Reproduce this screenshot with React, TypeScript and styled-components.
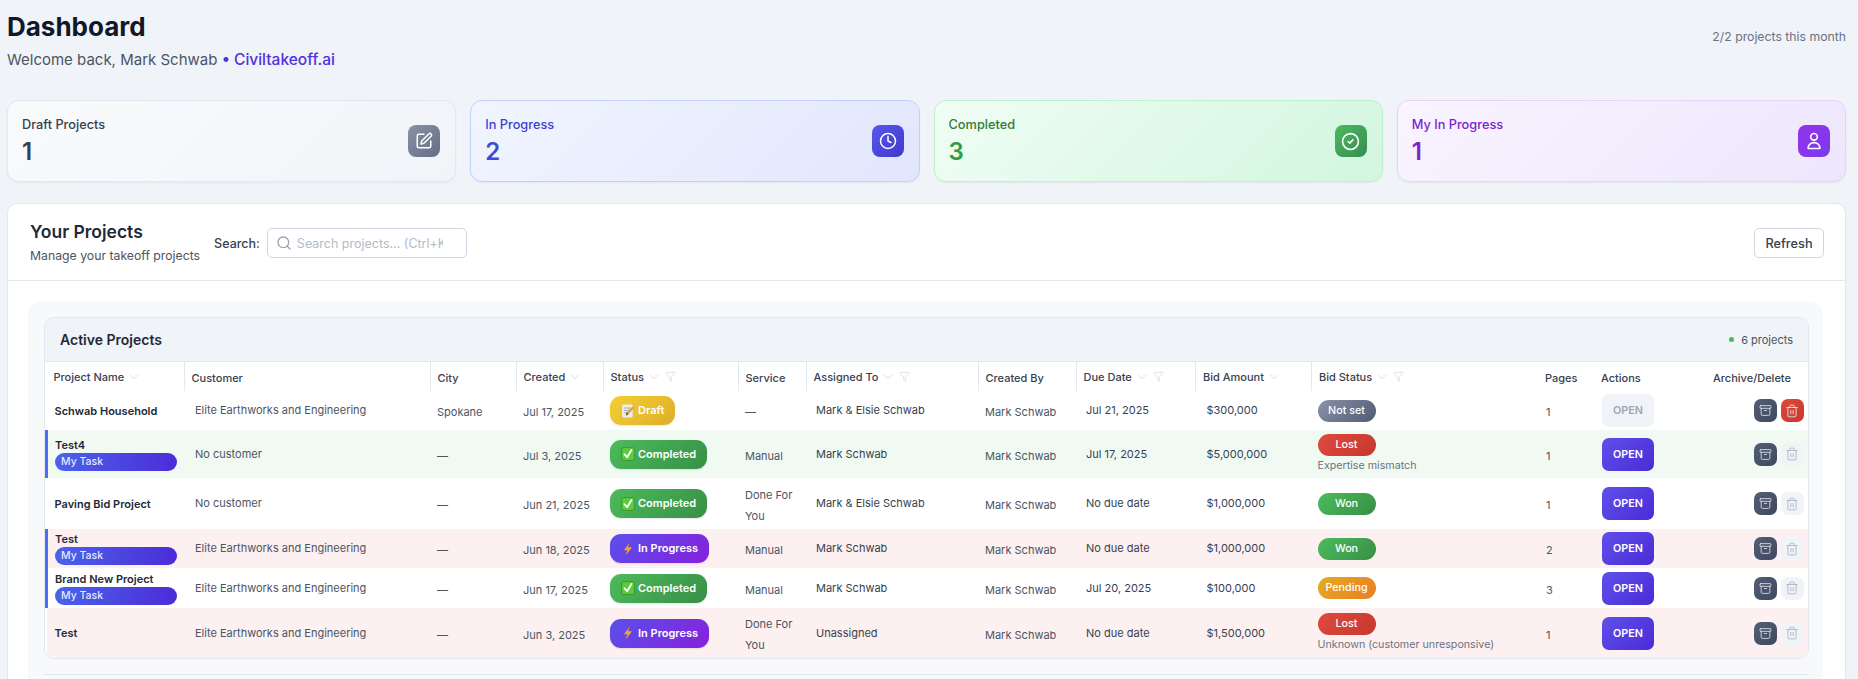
import React from "react";
import styled, { createGlobalStyle } from "styled-components";
import { SquarePen, Clock, CircleCheck, Search, ChevronDown, Filter, Archive, Trash2 } from "lucide-react";

const Global = createGlobalStyle`
  html, body { margin: 0; padding: 0; height: 100%; overflow: hidden; }
  body { background: #f0f3f8; font-family: Inter, "Liberation Sans", sans-serif; color: #1f2937; }
  * { box-sizing: border-box; }
`;

const Page = styled.div`
  height: 679px;
  overflow: hidden;
  padding: 0 12px 0 7px;
`;

const TopBar = styled.header`
  display: flex;
  justify-content: space-between;
  align-items: flex-start;
  height: 100px;
`;

const TitleBlock = styled.div`
  padding-top: 8px;
`;

const Title = styled.h1`
  margin: 0;
  font-size: 26px;
  line-height: 38px;
  font-weight: 700;
  color: #111827;
`;

const Subtitle = styled.p`
  margin: 3px 0 0;
  font-size: 15px;
  line-height: 22px;
  color: #4b5563;
`;

const Org = styled.span`
  color: #4f30e0;
  font-size: 15.5px;
  font-weight: 500;
`;

const Quota = styled.div`
  font-size: 12.25px;
  color: #6b7280;
  margin-top: 28px;
  line-height: 18px;
`;

const StatGrid = styled.section`
  display: grid;
  grid-template-columns: repeat(4, 1fr);
  gap: 14px;
  height: 82px;
`;

const tones = {
  gray: { bg: "#f9fafc, #f1f4f8", border: "#e2e7f0", label: "#374151", value: "#374151", icon: "#8a92a6, #646d85" },
  blue: { bg: "#f0f5ff, #e2e6fd", border: "#bfd2fb", label: "#3d3fd0", value: "#3d4bd8", icon: "#5558ec, #4338ca" },
  green: { bg: "#f0fdf4, #d2f6df", border: "#bdf0cd", label: "#2f7d3b", value: "#2f9e48", icon: "#4cb85f, #388e50" },
  purple: { bg: "#f9f4ff, #ede6fd", border: "#e6d3fb", label: "#7e22ce", value: "#7e22ce", icon: "#9333ea, #7c3aed" },
};
type Tone = keyof typeof tones;

const StatCard = styled.article<{ $tone: Tone }>`
  display: flex;
  align-items: center;
  justify-content: space-between;
  padding: 0 15px 0 14px;
  border-radius: 12px;
  border: 1px solid ${(p) => tones[p.$tone].border};
  background: linear-gradient(135deg, ${(p) => tones[p.$tone].bg});
  box-shadow: 0 1px 2px rgba(15, 23, 42, 0.05);
`;

const StatLabel = styled.div<{ $tone: Tone }>`
  font-size: 12.75px;
  line-height: 18px;
  font-weight: 500;
  color: ${(p) => tones[p.$tone].label};
`;

const StatValue = styled.div<{ $tone: Tone }>`
  font-size: 24px;
  line-height: 30px;
  margin-top: 3px;
  font-weight: 600;
  color: ${(p) => tones[p.$tone].value};
`;

const StatIcon = styled.div<{ $tone: Tone }>`
  width: 32px;
  height: 32px;
  border-radius: 8px;
  display: flex;
  align-items: center;
  justify-content: center;
  color: #fff;
  background: linear-gradient(135deg, ${(p) => tones[p.$tone].icon});
`;

const Panel = styled.section`
  margin-top: 21px;
  height: 600px;
  background: #fff;
  border: 1px solid #e2e7f0;
  border-radius: 10px;
`;

const PanelHead = styled.div`
  height: 77px;
  display: flex;
  align-items: center;
  justify-content: space-between;
  padding: 0 21px 0 22px;
  border-bottom: 1px solid #e2e7f0;
`;

const HeadLeft = styled.div`
  display: flex;
  align-items: center;
`;

const PanelTitle = styled.h2`
  margin: 1px 0 0;
  font-size: 17.5px;
  line-height: 24px;
  font-weight: 600;
  color: #1f2937;
`;

const PanelSub = styled.p`
  margin: 3px 0 0;
  font-size: 12.25px;
  line-height: 18px;
  color: #4b5563;
`;

const SearchLabel = styled.label`
  margin-left: 14px;
  margin-top: 2px;
  font-size: 12.5px;
  font-weight: 500;
  color: #374151;
`;

const SearchBox = styled.div`
  margin-left: 7px;
  margin-top: 2px;
  width: 200px;
  height: 30px;
  display: flex;
  align-items: center;
  gap: 5px;
  padding: 0 8px;
  border: 1px solid #cfd5e1;
  border-radius: 5px;
  color: #9aa3b2;
  overflow: hidden;
`;

const SearchInput = styled.input`
  border: 0;
  outline: 0;
  flex: none;
  width: 146px;
  padding: 0;
  background: transparent;
  font: 400 12.5px Inter, sans-serif;
  &::placeholder { color: #b4bbc8; }
`;

const RefreshButton = styled.button`
  margin-top: 2px;
  width: 70px;
  height: 30px;
  background: #fff;
  border: 1px solid #cfd5e1;
  border-radius: 5px;
  font: 500 12.75px Inter, sans-serif;
  color: #374151;
`;

const PanelBody = styled.div`
  padding: 21px 22px 0 20px;
`;

const Section = styled.div`
  background: #f8f9fb;
  border-radius: 12px;
  height: 400px;
  padding: 15px 14px 0 16px;
`;

const TableCard = styled.div`
  border: 1px solid #e2e7f0;
  border-radius: 10px;
  overflow: hidden;
  background: #fff;
`;

const TableHead = styled.div`
  height: 44px;
  display: flex;
  align-items: center;
  justify-content: space-between;
  padding: 0 15px;
  background: #f0f3f8;
  border-bottom: 1px solid #e2e7f0;
`;

const TableTitle = styled.h3`
  margin: 0;
  font-size: 14px;
  font-weight: 600;
  color: #1f2937;
`;

const CountLabel = styled.div`
  display: flex;
  align-items: center;
  gap: 7px;
  font-size: 11px;
  color: #4b5563;
`;

const Dot = styled.span`
  width: 5px;
  height: 5px;
  border-radius: 50%;
  background: #3fbf5f;
`;

const NextSection = styled.div`
  margin-top: 15px;
  border-top: 1px solid #e2e7f0;
`;

const Table = styled.table`
  width: 100%;
  table-layout: fixed;
  border-collapse: collapse;
  font-size: 11px;
`;

const Th = styled.th<{ $sep?: boolean }>`
  height: 29px;
  padding: 0 0 0 7px;
  text-align: left;
  font-size: 11px;
  font-weight: 500;
  color: #374151;
  white-space: nowrap;
  border-right: ${(p) => (p.$sep ? "1px solid #e2e7f0" : "0")};
`;

const HeadInner = styled.span<{ $sorted?: boolean }>`
  display: inline-flex;
  align-items: center;
  gap: 3px;
  color: #374151;
  position: relative;
  top: ${(p) => (p.$sorted ? 0 : 1)}px;
`;

const SortIcon = styled(ChevronDown)`
  color: #c8ced9;
`;

const FilterIcon = styled(Filter)`
  color: #c8ced9;
  margin-left: 1px;
`;

const rowBg = { none: "#fff", green: "#f0faf3", red: "#fcf0f0" };

const Tr = styled.tr<{ $bg: keyof typeof rowBg; $h: number }>`
  height: ${(p) => p.$h}px;
  background: ${(p) => rowBg[p.$bg]};
`;

const Td = styled.td<{ $pl?: number; $low?: boolean }>`
  padding: ${(p) => (p.$low ? "4px" : "0")} 0 0 ${(p) => p.$pl ?? 8}px;
  color: #4b5563;
  font-size: 11px;
  line-height: 21px;
  vertical-align: middle;
  white-space: nowrap;
`;

const WrapTd = styled(Td)`
  white-space: normal;
  padding-right: 6px;
`;

const AmountTd = styled(Td)`
  color: #374151;
`;

const NameTd = styled.td<{ $mine: boolean }>`
  padding: 0 6px 0 ${(p) => (p.$mine ? 7 : 8)}px;
  border-left: ${(p) => (p.$mine ? "3px solid #4f6ef7" : "0")};
  vertical-align: middle;
`;

const NameText = styled.div`
  font-size: 11px;
  line-height: 14px;
  font-weight: 600;
  color: #1f2937;
`;

const MyTask = styled.div`
  height: 18px;
  width: 122px;
  border-radius: 9px;
  margin-top: 1px;
  padding-left: 6px;
  font-size: 10.5px;
  line-height: 18px;
  font-weight: 500;
  color: #e6e9ff;
  background: linear-gradient(90deg, #4a63ea, #4c2cd8);
`;

const statusStyles = {
  draft: "#f2cf35, #dfae27",
  done: "#4cbb5c, #388f46",
  progress: "#5b50ea, #8620dc",
};

const StatusPill = styled.span<{ $kind: keyof typeof statusStyles }>`
  display: inline-flex;
  align-items: center;
  gap: 3px;
  height: 29px;
  padding: 0 11px;
  border-radius: 11px;
  font-size: 11px;
  font-weight: 600;
  color: #fff;
  background: linear-gradient(135deg, ${(p) => statusStyles[p.$kind]});
  box-shadow: 0 1px 2px rgba(15, 23, 42, 0.1);
`;

const bidStyles = {
  none: "#8a93a8, #4f5a75",
  lost: "#e0493f, #c5392c",
  won: "#4cbb5c, #388f46",
  pending: "#e3ad20, #ea7c25",
};

const BidPill = styled.div<{ $kind: keyof typeof bidStyles }>`
  width: 58px;
  height: 22px;
  border-radius: 11px;
  text-align: center;
  font-size: 10.75px;
  line-height: 22px;
  font-weight: 500;
  color: #fff;
  background: linear-gradient(135deg, ${(p) => bidStyles[p.$kind]});
`;

const BidNote = styled.div`
  margin-top: 2px;
  font-size: 10.7px;
  line-height: 16px;
  color: #6b7280;
`;

const OpenButton = styled.button<{ $off?: boolean }>`
  display: block;
  width: 52px;
  height: 33px;
  border: 0;
  padding: 0;
  border-radius: 7px;
  font: 600 10.75px Inter, sans-serif;
  color: ${(p) => (p.$off ? "#a0a7b6" : "#fff")};
  background: ${(p) => (p.$off ? "#f0f3f8" : "linear-gradient(135deg, #5f50ea, #4a2bd6)")};
`;

const ActionRow = styled.div`
  display: flex;
  justify-content: flex-end;
  gap: 4px;
  padding-right: 7px;
`;

const IconButton = styled.button<{ $kind: "archive" | "delete" | "off" }>`
  width: 23px;
  height: 23px;
  padding: 0;
  border: 0;
  border-radius: 7px;
  display: flex;
  align-items: center;
  justify-content: center;
  color: ${(p) => (p.$kind === "off" ? "#aab2c4" : "#e6e9f0")};
  background: ${(p) =>
    p.$kind === "archive"
      ? "linear-gradient(135deg, #545e75, #3e4860)"
      : p.$kind === "delete"
        ? "linear-gradient(135deg, #dd4a3a, #c43a2b)"
        : "#f0f3f8"};
`;

const UserGlyph = () => (
  <svg width="20" height="20" viewBox="0 0 24 24" fill="none" stroke="currentColor" strokeWidth="2" strokeLinejoin="round">
    <circle cx="12" cy="7" r="4" />
    <path d="M5 21v-1a7 6 0 0 1 14 0v1z" />
  </svg>
);

const MemoEmoji = () => (
  <svg width="14" height="14" viewBox="0 0 24 24">
    <rect x="2" y="1" width="18" height="22" rx="2" fill="#eceef2" />
    <path d="M5 7h12M5 11h12M5 15h7" stroke="#9aa3b2" strokeWidth="1.5" />
    <path d="M8 20l2-6L20 4l3 3-10 10z" fill="#e9a13b" />
    <path d="M8 20l2-6 3 3z" fill="#5b4a3a" />
  </svg>
);

const CheckEmoji = () => (
  <svg width="14" height="14" viewBox="0 0 24 24">
    <rect x="1" y="1" width="22" height="22" rx="4" fill="#5ccb3c" stroke="#2f8a22" strokeWidth="1.2" />
    <path d="M6 12.5l4.5 5L18 5" fill="none" stroke="#fff" strokeWidth="3.2" strokeLinecap="round" strokeLinejoin="round" />
  </svg>
);

const BoltEmoji = () => (
  <svg width="14" height="14" viewBox="0 0 24 24">
    <path d="M15 1L5 14h6l-3 9 11-14h-7z" fill="#f5a623" />
  </svg>
);

const columns = [137.5, 246, 86, 87, 135, 68, 172, 98, 119.5, 116, 226.5, 56, 112, 104.5];

const headers: { label: string; sep?: boolean; sort?: boolean; filter?: boolean }[] = [
  { label: "Project Name", sep: true, sort: true },
  { label: "Customer", sep: true },
  { label: "City", sep: true },
  { label: "Created", sep: true, sort: true },
  { label: "Status", sep: true, sort: true, filter: true },
  { label: "Service", sep: true },
  { label: "Assigned To", sep: true, sort: true, filter: true },
  { label: "Created By", sep: true },
  { label: "Due Date", sep: true, sort: true, filter: true },
  { label: "Bid Amount", sep: true, sort: true },
  { label: "Bid Status", sort: true, filter: true },
  { label: "Pages" },
  { label: "Actions" },
  { label: "Archive/Delete" },
];

type Project = {
  name: string; mine?: boolean; bg: keyof typeof rowBg; h: number; customer: string; city: string; created: string;
  status: keyof typeof statusStyles; service: string; assigned: string; due: string; amount: string;
  bid: keyof typeof bidStyles; note?: string; pages: number; off?: boolean;
};

const projects: Project[] = [
  { name: "Schwab Household", bg: "none", h: 39, customer: "Elite Earthworks and Engineering", city: "Spokane", created: "Jul 17, 2025", status: "draft", service: "—", assigned: "Mark & Elsie Schwab", due: "Jul 21, 2025", amount: "$300,000", bid: "none", pages: 1, off: true },
  { name: "Test4", mine: true, bg: "green", h: 48, customer: "No customer", city: "—", created: "Jul 3, 2025", status: "done", service: "Manual", assigned: "Mark Schwab", due: "Jul 17, 2025", amount: "$5,000,000", bid: "lost", note: "Expertise mismatch", pages: 1 },
  { name: "Paving Bid Project", bg: "none", h: 51, customer: "No customer", city: "—", created: "Jun 21, 2025", status: "done", service: "Done For You", assigned: "Mark & Elsie Schwab", due: "No due date", amount: "$1,000,000", bid: "won", pages: 1 },
  { name: "Test", mine: true, bg: "red", h: 39, customer: "Elite Earthworks and Engineering", city: "—", created: "Jun 18, 2025", status: "progress", service: "Manual", assigned: "Mark Schwab", due: "No due date", amount: "$1,000,000", bid: "won", pages: 2 },
  { name: "Brand New Project", mine: true, bg: "none", h: 40, customer: "Elite Earthworks and Engineering", city: "—", created: "Jun 17, 2025", status: "done", service: "Manual", assigned: "Mark Schwab", due: "Jul 20, 2025", amount: "$100,000", bid: "pending", pages: 3 },
  { name: "Test", bg: "red", h: 50, customer: "Elite Earthworks and Engineering", city: "—", created: "Jun 3, 2025", status: "progress", service: "Done For You", assigned: "Unassigned", due: "No due date", amount: "$1,500,000", bid: "lost", note: "Unknown (customer unresponsive)", pages: 1 },
];

const statusText = {
  draft: { icon: <MemoEmoji />, label: "Draft" },
  done: { icon: <CheckEmoji />, label: "Completed" },
  progress: { icon: <BoltEmoji />, label: "In Progress" },
};
const bidText = { none: "Not set", lost: "Lost", won: "Won", pending: "Pending" };

const stats: { tone: Tone; label: string; value: number; icon: React.ReactNode }[] = [
  { tone: "gray", label: "Draft Projects", value: 1, icon: <SquarePen size={18} /> },
  { tone: "blue", label: "In Progress", value: 2, icon: <Clock size={18} /> },
  { tone: "green", label: "Completed", value: 3, icon: <CircleCheck size={19} /> },
  { tone: "purple", label: "My In Progress", value: 1, icon: <UserGlyph /> },
];

export default function App() {
  return (
    <Page>
      <Global />
      <TopBar>
        <TitleBlock>
          <Title>Dashboard</Title>
          <Subtitle>
            Welcome back, Mark Schwab <Org>• Civiltakeoff.ai</Org>
          </Subtitle>
        </TitleBlock>
        <Quota>2/2 projects this month</Quota>
      </TopBar>
      <StatGrid>
        {stats.map((s) => (
          <StatCard key={s.tone} $tone={s.tone}>
            <div>
              <StatLabel $tone={s.tone}>{s.label}</StatLabel>
              <StatValue $tone={s.tone}>{s.value}</StatValue>
            </div>
            <StatIcon $tone={s.tone}>{s.icon}</StatIcon>
          </StatCard>
        ))}
      </StatGrid>
      <Panel>
        <PanelHead>
          <HeadLeft>
            <div>
              <PanelTitle>Your Projects</PanelTitle>
              <PanelSub>Manage your takeoff projects</PanelSub>
            </div>
            <SearchLabel>Search:</SearchLabel>
            <SearchBox>
              <Search size={16} />
              <SearchInput placeholder="Search projects... (Ctrl+K)" />
            </SearchBox>
          </HeadLeft>
          <RefreshButton>Refresh</RefreshButton>
        </PanelHead>
        <PanelBody>
          <Section>
            <TableCard>
              <TableHead>
                <TableTitle>Active Projects</TableTitle>
                <CountLabel>
                  <Dot />6 projects
                </CountLabel>
              </TableHead>
              <Table>
                <colgroup>
                  {columns.map((w, i) => (
                    <col key={i} style={{ width: w }} />
                  ))}
                </colgroup>
                <thead>
                  <tr>
                    {headers.map((h) => (
                      <Th key={h.label} $sep={h.sep}>
                        <HeadInner $sorted={h.sort}>
                          {h.label}
                          {h.sort && <SortIcon size={14} strokeWidth={1.25} />}
                          {h.filter && <FilterIcon size={11} strokeWidth={1.25} />}
                        </HeadInner>
                      </Th>
                    ))}
                  </tr>
                </thead>
                <tbody>
                  {projects.map((p, i) => (
                    <Tr key={i} $bg={p.bg} $h={p.h}>
                      <NameTd $mine={!!p.mine}>
                        <NameText>{p.name}</NameText>
                        {p.mine && <MyTask>My Task</MyTask>}
                      </NameTd>
                      <Td $pl={11}>{p.customer}</Td>
                      <Td $low $pl={7}>{p.city}</Td>
                      <Td $low $pl={7}>{p.created}</Td>
                      <Td $pl={7}>
                        <StatusPill $kind={p.status}>
                          {statusText[p.status].icon}
                          {statusText[p.status].label}
                        </StatusPill>
                      </Td>
                      <WrapTd $low $pl={7}>{p.service}</WrapTd>
                      <AmountTd $pl={10}>{p.assigned}</AmountTd>
                      <Td $low $pl={7}>Mark Schwab</Td>
                      <AmountTd $pl={10}>{p.due}</AmountTd>
                      <AmountTd $pl={11}>{p.amount}</AmountTd>
                      <Td $pl={6}>
                        <BidPill $kind={p.bid}>{bidText[p.bid]}</BidPill>
                        {p.note && <BidNote>{p.note}</BidNote>}
                      </Td>
                      <Td $low $pl={8}>{p.pages}</Td>
                      <Td>
                        <OpenButton $off={p.off}>OPEN</OpenButton>
                      </Td>
                      <Td $pl={0}>
                        <ActionRow>
                          <IconButton $kind="archive"><Archive size={13} strokeWidth={1.5} /></IconButton>
                          <IconButton $kind={p.off ? "delete" : "off"}><Trash2 size={14} strokeWidth={1.5} /></IconButton>
                        </ActionRow>
                      </Td>
                    </Tr>
                  ))}
                </tbody>
              </Table>
            </TableCard>
            <NextSection />
          </Section>
        </PanelBody>
      </Panel>
    </Page>
  );
}
